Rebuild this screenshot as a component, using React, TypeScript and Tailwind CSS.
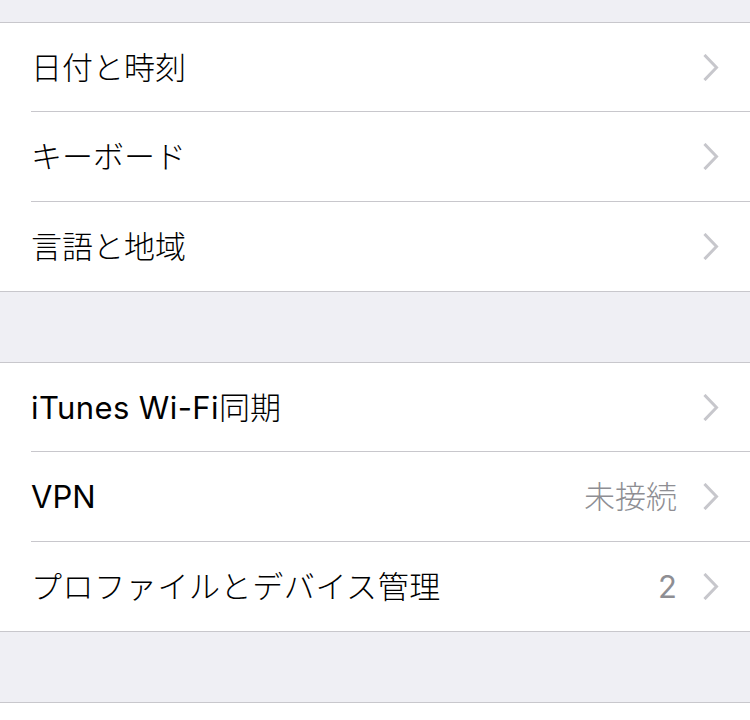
import React from "react";

const Chevron = () => (
  <svg width="16" height="27" viewBox="0 0 16 27" className="shrink-0">
    <polyline points="2.5,2 13.5,13.5 2.5,25" fill="none" stroke="#c7c7cc" strokeWidth="3" strokeLinecap="square" strokeLinejoin="miter" />
  </svg>
);

type RowProps = { label: React.ReactNode; value?: React.ReactNode; h: string; sep?: boolean; track?: string };

const Row = ({ label, value, h, sep, track }: RowProps) => (
  <div className="pl-[31px]">
    <div className={`flex items-center pr-[31px] ${h} ${sep ? "border-t border-[#c8c7cc]" : ""}`}>
      <div className={`flex-1 text-[31px] text-black leading-none font-light ${track ?? ""}`}>{label}</div>
      {value && <div className="text-[31px] text-[#8e8e93] leading-none font-light mr-[26px]">{value}</div>}
      <Chevron />
    </div>
  </div>
);

export default function App() {
  return (
    <div
      className="w-[750px] h-[720px] bg-[#efeff4] overflow-hidden"
      style={{ fontFamily: '"Inter", "Noto Sans CJK JP", sans-serif' }}
    >
      <div className="h-[22px]" />
      <div className="bg-white border-y border-[#c8c7cc]">
        <Row label="日付と時刻" h="h-[88px]" />
        <Row label="キーボード" h="h-[90px]" sep />
        <Row label="言語と地域" h="h-[90px]" sep />
      </div>
      <div className="h-[70px]" />
      <div className="bg-white border-y border-[#c8c7cc]">
        <Row
          label={
            <>
              <span className="font-normal tracking-[0.4px]">iTunes Wi-Fi</span>同期
            </>
          }
          h="h-[88px]"
        />
        <Row label={<span className="font-normal">VPN</span>} value="未接続" h="h-[90px]" sep />
        <Row
          label="プロファイルとデバイス管理"
          value={<span className="font-normal">2</span>}
          h="h-[90px]"
          sep
          track="tracking-[0.6px]"
        />
      </div>
      <div className="h-[70px]" />
      <div className="bg-white border-t border-[#c8c7cc] h-[20px]" />
    </div>
  );
}
